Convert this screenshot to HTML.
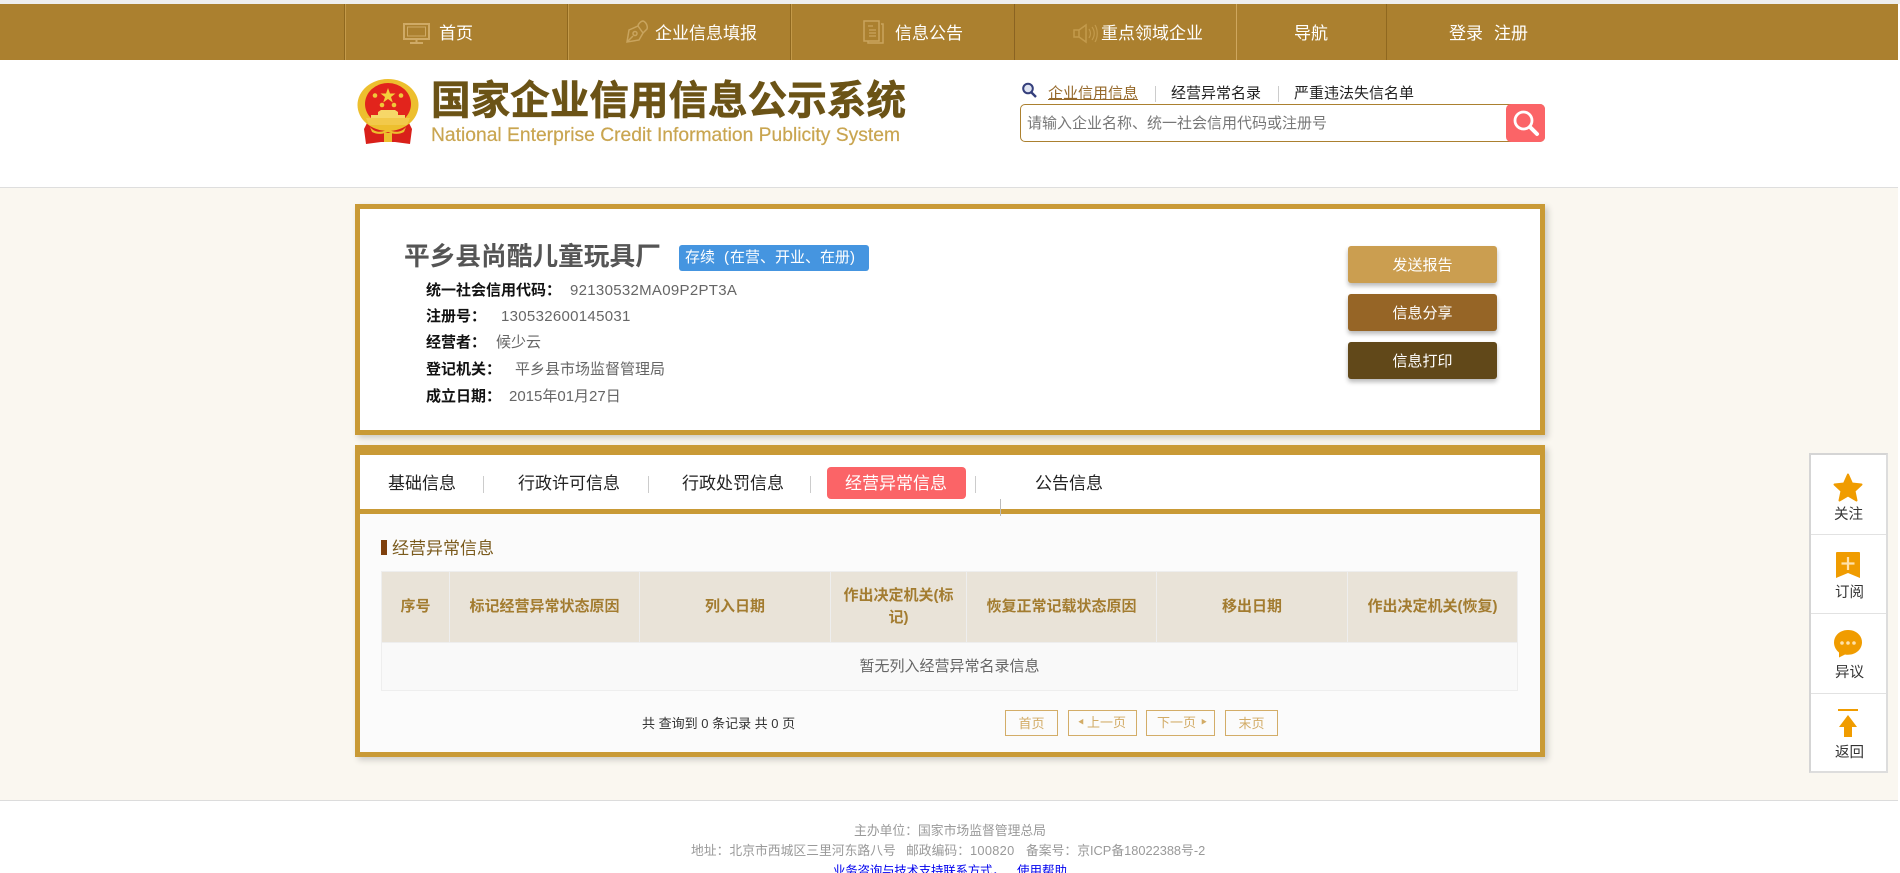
<!DOCTYPE html>
<html lang="zh-CN"><head><meta charset="utf-8"><title>国家企业信用信息公示系统</title>
<style>
html,body{margin:0;padding:0;width:1900px;height:873px;overflow:hidden;background:#fff}
body{position:relative;font-family:"Liberation Sans","Noto Sans CJK SC",sans-serif;font-size:15px;color:#333}
.a{position:absolute;box-sizing:border-box}
.t{position:absolute;white-space:nowrap;line-height:20px;height:20px}
.nav{color:#fff;font-size:17px}
.sepn{position:absolute;top:4px;width:1px;height:56px}
.l{font-weight:bold;color:#111;font-size:15px}
.v{color:#666;font-size:15px}
.btn{position:absolute;left:1348px;width:149px;height:37px;border-radius:3px;color:#fff;text-align:center;line-height:39px;font-size:15px;box-shadow:0 3px 5px rgba(0,0,0,.28)}
.tab{font-size:17px;color:#222}
.ts{position:absolute;top:476px;width:1px;height:17px;background:#ccc}
table{position:absolute;left:381px;top:571px;width:1136px;border-collapse:collapse;table-layout:fixed}
th,td{border:1px solid #eee;padding:0 10px;text-align:center;font-size:15px;box-sizing:border-box}
th{background:#e9e3d8;color:#a37c30;font-weight:bold;height:71px;line-height:22px}
td{background:#f9f9f9;color:#666;height:48px;padding-bottom:2px}
.pg{position:absolute;top:710px;height:26px;border:1px solid #d3ad68;color:#d2ab66;font-size:13px;line-height:25px;text-align:center;box-sizing:border-box;white-space:nowrap}
.sl{position:absolute;left:1811px;width:75px;text-align:center;font-size:14.5px;color:#333;line-height:20px;height:20px}
.sd{position:absolute;left:1811px;width:75px;height:1px;background:#e2e2e2}
.f{position:absolute;left:0;width:1900px;text-align:center;font-size:12.8px;color:#999;line-height:19px;height:19px;white-space:nowrap}
.f2{position:absolute;top:841px;font-size:12.8px;color:#999;line-height:19px;height:19px;white-space:nowrap}
</style></head><body>

<div class="a" style="left:0;top:0;width:1900px;height:4px;background:#eee"></div>
<div class="a" style="left:0;top:4px;width:1898px;height:56px;background:#ab802f"></div>
<div class="sepn" style="left:344px;background:#8f681f"></div><div class="sepn" style="left:345px;background:#c49a4a"></div>
<div class="sepn" style="left:567px;background:#8f681f"></div><div class="sepn" style="left:568px;background:#c49a4a"></div>
<div class="sepn" style="left:790px;background:#8f681f"></div><div class="sepn" style="left:791px;background:#c49a4a"></div>
<div class="sepn" style="left:1014px;background:#8a6322"></div>
<div class="sepn" style="left:1236px;background:#cfa75e"></div>
<div class="sepn" style="left:1386px;background:#8f681f"></div>

<svg class="a" style="left:403px;top:23px" width="27" height="21" viewBox="0 0 27 21" fill="none" stroke="#cfaa66" stroke-width="2"><rect x="1" y="1" width="25" height="15"/><rect x="4.500" y="4" width="18" height="9" stroke-width="1"/><path d="M13.500 16v3M7 20h13"/></svg>
<svg class="a" style="left:626px;top:20px" width="23" height="23" viewBox="0 0 23 23" fill="none" stroke="#c9a45e" stroke-width="1.500"><path d="M1 22 3 10 12 6 17 13 13 20ZM1 22l6-6"/><circle cx="9" cy="13.500" r="2"/><path d="M12 6c0-2 3-5 5-5 3 1 5 5 4 8l-4 4"/></svg>
<svg class="a" style="left:863px;top:20px" width="22" height="24" viewBox="0 0 22 24" fill="none" stroke="#c9a45e" stroke-width="1.500"><rect x="1" y="1" width="15" height="20"/><path d="M18 4h2v19H5v-2"/><path d="M5 6h5M6 10h7M6 13h7M6 16h7" stroke-width="1.300"/></svg>
<svg class="a" style="left:1073px;top:23px" width="25" height="21" viewBox="0 0 25 21" fill="none" stroke="#c39a4c" stroke-width="1.500"><path d="M1 7h5v7H1zM6 7l7-5v17l-7-5z"/><path d="M16 6c2 3 2 6 0 9M19 4c3 4 3 9 0 13M22 2c3 5 3 12 0 17" stroke-width="1.200"/></svg>

<div class="t nav" style="left:439px;top:24px">首页</div>
<div class="t nav" style="left:655px;top:24px">企业信息填报</div>
<div class="t nav" style="left:895px;top:24px">信息公告</div>
<div class="t nav" style="left:1101px;top:24px">重点领域企业</div>
<div class="t nav" style="left:1294px;top:24px">导航</div>
<div class="t nav" style="left:1449px;top:24px">登录</div>
<div class="t nav" style="left:1494px;top:24px">注册</div>

<svg class="a" style="left:357px;top:79px" width="62" height="67" viewBox="0 0 62 67">
<path d="M10 44 L7 50 L9 65 L24 63 L38 63 L53 65 L55 50 L52 44 Z" fill="#d9201a"/>
<ellipse cx="31" cy="26" rx="30.500" ry="26" fill="#edbf2e"/>
<ellipse cx="31" cy="25" rx="23" ry="21" fill="#e2241c"/>
<path d="M9 39 L53 39 L50 46 L12 46 Z" fill="#f2c94a"/>
<path d="M14 39V36H48V39Z" fill="#f6d768"/>
<path d="M21 36v-3l3-2h14l3 2v3z" fill="#f6d768"/>
<path d="M13 48c5 6 12 6 18 2 6 4 13 4 18-2l-2 5c-6 3-11 2-16 0-5 2-10 3-16 0z" fill="#edbf2e"/>
<path d="M27 54h8v9h-8z" fill="#edbf2e"/>
<polygon points="31,9 33,14.500 38.500,14.500 34,18 35.800,23.500 31,20 26.200,23.500 28,18 23.500,14.500 29,14.500" fill="#f4cf3c"/>
<circle cx="18" cy="16.500" r="2.300" fill="#f0c83a"/><circle cx="44" cy="16.500" r="2.300" fill="#f0c83a"/><circle cx="25" cy="26" r="2.300" fill="#f0c83a"/><circle cx="37" cy="26" r="2.300" fill="#f0c83a"/>
</svg>
<div class="t" style="left:431px;top:80px;height:42px;line-height:42px;font-size:39.600px;font-weight:bold;color:#6b5316;-webkit-text-stroke:.6px #6b5316">国家企业信用信息公示系统</div>
<svg class="a" style="left:431px;top:122px;overflow:visible" width="470" height="26"><text x="0" y="19" font-size="19.500" fill="#c9a550" stroke="#c9a550" stroke-width=".2" font-family="Liberation Sans, sans-serif" textLength="469" lengthAdjust="spacingAndGlyphs">National Enterprise Credit Information Publicity System</text></svg>

<svg class="a" style="left:1021px;top:82px" width="18" height="16" viewBox="0 0 18 16" fill="none"><circle cx="7" cy="6.500" r="4.800" stroke="#353f7c" stroke-width="2" fill="#dfe4f2"/><path d="M10.500 10.500 15 15" stroke="#353f7c" stroke-width="2.400"/></svg>
<div class="t" style="left:1048px;top:84px;color:#95682a;text-decoration:underline">企业信用信息</div>
<div class="a" style="left:1155px;top:86px;width:1px;height:16px;background:#ccc"></div>
<div class="t" style="left:1171px;top:84px;color:#222">经营异常名录</div>
<div class="a" style="left:1278px;top:86px;width:1px;height:16px;background:#ccc"></div>
<div class="t" style="left:1294px;top:84px;color:#222">严重违法失信名单</div>
<div class="a" style="left:1020px;top:104px;width:525px;height:38px;border:1px solid #ab802f;border-radius:5px;background:#fff"></div>
<div class="t" style="left:1027px;top:114px;color:#777">请输入企业名称、统一社会信用代码或注册号</div>
<div class="a" style="left:1506px;top:104px;width:39px;height:38px;background:#fb6467;border-radius:5px"></div>
<svg class="a" style="left:1511px;top:108px" width="30" height="30" viewBox="0 0 30 30" fill="none" stroke="#fff"><circle cx="12.500" cy="12.500" r="8.500" stroke-width="2.800"/><path d="M19 19l7 7" stroke-width="4" stroke-linecap="round"/></svg>

<div class="a" style="left:0;top:187px;width:1898px;height:1px;background:#dedede"></div>
<div class="a" style="left:0;top:188px;width:1898px;height:612px;background:#faf7f0"></div>
<div class="a" style="left:0;top:800px;width:1898px;height:1px;background:#dcdcdc"></div>

<div class="a" style="left:355px;top:204px;width:1190px;height:231px;border:5px solid #c99a36;background:#fff;box-shadow:3px 3px 6px rgba(0,0,0,.18)"></div>
<div class="t" style="left:404px;top:240px;height:34px;line-height:34px;font-size:25.700px;font-weight:bold;color:#555">平乡县尚酷儿童玩具厂</div>
<div class="a" style="left:679px;top:245px;width:190px;height:26px;background:#4595e0;border-radius:3px"></div>
<div class="t" style="left:685px;top:248px;color:#fff">存续</div>
<div class="t" style="left:724px;top:248px;color:#fff">(</div>
<div class="t" style="left:730px;top:248px;color:#fff">在营、开业、在册</div>
<div class="t" style="left:850px;top:248px;color:#fff">)</div>

<div class="t l" style="left:426px;top:280.500px">统一社会信用代码：</div><div class="t v" style="left:570px;top:280.500px;letter-spacing:.3px">92130532MA09P2PT3A</div>
<div class="t l" style="left:426px;top:306.500px">注册号：</div><div class="t v" style="left:501px;top:306.500px;letter-spacing:.3px">130532600145031</div>
<div class="t l" style="left:426px;top:333px">经营者：</div><div class="t v" style="left:496px;top:333px">候少云</div>
<div class="t l" style="left:426px;top:360px">登记机关：</div><div class="t v" style="left:515px;top:360px">平乡县市场监督管理局</div>
<div class="t l" style="left:426px;top:387px">成立日期：</div><div class="t v" style="left:509px;top:387px">2015年01月27日</div>

<div class="btn" style="top:246px;background:#cb9e50">发送报告</div>
<div class="btn" style="top:294px;background:#966526">信息分享</div>
<div class="btn" style="top:342px;background:#614819">信息打印</div>

<div class="a" style="left:355px;top:445px;width:1190px;height:312px;border:5px solid #c99a36;border-top-width:10px;background:#fbfbfb;box-shadow:3px 3px 6px rgba(0,0,0,.18)"></div>
<div class="a" style="left:360px;top:455px;width:1180px;height:54px;background:#fff"></div>
<div class="a" style="left:360px;top:509px;width:1180px;height:5px;background:#c99a36"></div>

<div class="t tab" style="left:388px;top:474px">基础信息</div><div class="ts" style="left:483px"></div>
<div class="t tab" style="left:518px;top:474px">行政许可信息</div><div class="ts" style="left:648px"></div>
<div class="t tab" style="left:682px;top:474px">行政处罚信息</div><div class="ts" style="left:810px"></div>
<div class="a" style="left:827px;top:467px;width:139px;height:32px;background:#fb6467;border-radius:4px"></div>
<div class="t tab" style="left:845px;top:474px;color:#fff">经营异常信息</div><div class="ts" style="left:975px"></div>
<div class="a" style="left:1000px;top:499px;width:1px;height:17px;background:#bbb"></div>
<div class="t tab" style="left:1035px;top:474px">公告信息</div>

<div class="a" style="left:381px;top:540px;width:6px;height:15px;background:#7f400c"></div>
<div class="t" style="left:392px;top:539px;font-size:17px;color:#7a5a1c">经营异常信息</div>

<table>
<colgroup><col style="width:68px"><col style="width:190px"><col style="width:191px"><col style="width:136px"><col style="width:190px"><col style="width:191px"><col style="width:170px"></colgroup>
<tr><th>序号</th><th>标记经营异常状态原因</th><th>列入日期</th><th>作出决定机关(标记)</th><th>恢复正常记载状态原因</th><th>移出日期</th><th>作出决定机关(恢复)</th></tr>
<tr><td colspan="7">暂无列入经营异常名录信息</td></tr>
</table>

<div class="t" style="left:642px;top:714px;font-size:13px;color:#333">共 查询到 0 条记录 共 0 页</div>
<div class="pg" style="left:1005px;width:53px">首页</div>
<div class="pg" style="left:1068px;width:69px"></div><div class="t" style="left:1078px;top:713px;font-size:6px;color:#d2ab66">◀</div><div class="t" style="left:1087px;top:713px;font-size:13px;color:#d2ab66">上一页</div>
<div class="pg" style="left:1146px;width:69px"></div><div class="t" style="left:1157px;top:713px;font-size:13px;color:#d2ab66">下一页</div><div class="t" style="left:1201px;top:713px;font-size:6px;color:#d2ab66">▶</div>
<div class="pg" style="left:1225px;width:53px">末页</div>

<div class="a" style="left:1809px;top:453px;width:79px;height:320px;background:#fff;border:2px solid #ddd;border-top-color:#d5d5d5;border-left-color:#d5d5d5"></div>
<div class="sd" style="top:534px"></div><div class="sd" style="top:613px"></div><div class="sd" style="top:693px"></div>
<svg class="a" style="left:1833px;top:473px" width="30" height="30" viewBox="0 0 30 30"><path d="M15 1.500 19 10.500 28.500 11.500 21.500 18 23.500 27.500 15 22.500 6.500 27.500 8.500 18 1.500 11.500 11 10.500Z" fill="#f09c00" stroke="#f09c00" stroke-width="2" stroke-linejoin="round"/></svg>
<div class="sl" style="top:505px">关注</div>
<svg class="a" style="left:1836px;top:552px" width="24" height="26" viewBox="0 0 24 26"><path d="M0 1a1 1 0 0 1 1-1h22a1 1 0 0 1 1 1v25l-12-5-12 5z" fill="#f09c00"/><path d="M12 5v13M5.500 11.500h13" stroke="#ffe2ab" stroke-width="2.200"/></svg>
<div class="sl" style="top:583px;left:1812px">订阅</div>
<svg class="a" style="left:1834px;top:630px" width="28" height="28" viewBox="0 0 28 28"><path d="M14 0C6 0 0 5.500 0 12.500c0 4 2 7.500 5 10l0 5 6-3c1 .2 2 .3 3 .3 8 0 14-5.500 14-12.500S22 0 14 0z" fill="#f09c00"/><circle cx="8" cy="13" r="1.800" fill="#ffe2ab"/><circle cx="14" cy="13" r="1.800" fill="#ffe2ab"/><circle cx="20" cy="13" r="1.800" fill="#ffe2ab"/></svg>
<div class="sl" style="top:663px;left:1812px">异议</div>
<svg class="a" style="left:1838px;top:709px" width="20" height="29" viewBox="0 0 20 29"><rect width="20" height="2" fill="#f09c00"/><path d="M10 6 19 18H14V28H6V18H1Z" fill="#f09c00"/></svg>
<div class="sl" style="top:743px;left:1812px">返回</div>

<div class="f" style="top:821px">主办单位：国家市场监督管理总局</div>
<div class="f2" style="left:691px">地址：北京市西城区三里河东路八号</div>
<div class="f2" style="left:906px">邮政编码：<span style="letter-spacing:.3px">100820</span></div>
<div class="f2" style="left:1026px">备案号：京ICP备18022388号-2</div>
<div class="t" style="left:833px;top:861px;font-size:12.5px;color:#00e;letter-spacing:-.25px">业务咨询与技术支持联系方式，</div>
<div class="t" style="left:1017px;top:861px;font-size:12.5px;color:#00e">使用帮助</div>
</body></html>
